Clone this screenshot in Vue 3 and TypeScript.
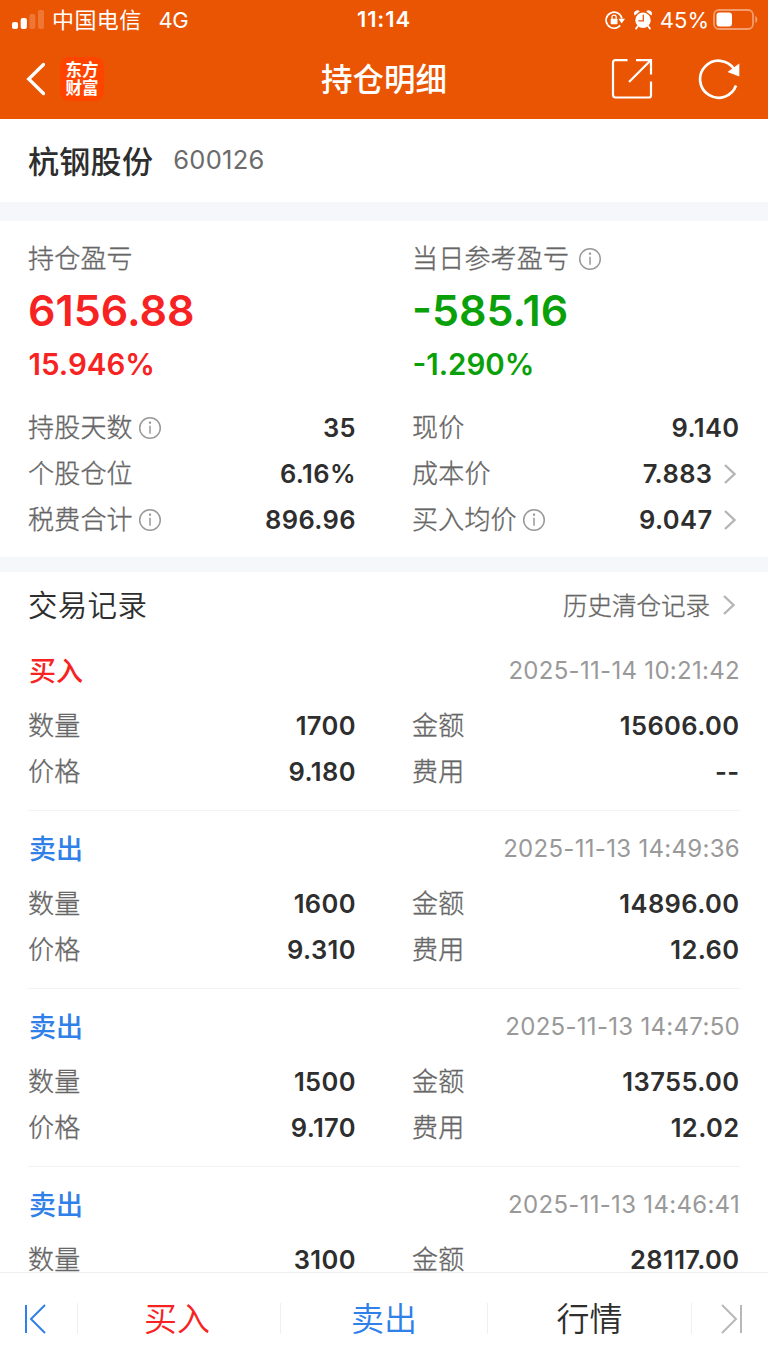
<script setup lang="ts">
interface Cell { label: string; value: string; info?: boolean; arrow?: boolean }
interface Trade { side: string; kind: 'buy' | 'sell'; time: string; cells: Cell[] }

const stats: Cell[] = [
  { label: '持股天数', value: '35', info: true },
  { label: '现价', value: '9.140' },
  { label: '个股仓位', value: '6.16%' },
  { label: '成本价', value: '7.883', arrow: true },
  { label: '税费合计', value: '896.96', info: true },
  { label: '买入均价', value: '9.047', info: true, arrow: true },
]

function trade(kind: 'buy' | 'sell', time: string, qty: string, amount: string, price?: string, fee?: string): Trade {
  const cells: Cell[] = [
    { label: '数量', value: qty },
    { label: '金额', value: amount },
  ]
  if (price && fee) cells.push({ label: '价格', value: price }, { label: '费用', value: fee })
  return { side: kind === 'buy' ? '买入' : '卖出', kind, time, cells }
}

const trades: Trade[] = [
  trade('buy', '2025-11-14 10:21:42', '1700', '15606.00', '9.180', '--'),
  trade('sell', '2025-11-13 14:49:36', '1600', '14896.00', '9.310', '12.60'),
  trade('sell', '2025-11-13 14:47:50', '1500', '13755.00', '9.170', '12.02'),
  trade('sell', '2025-11-13 14:46:41', '3100', '28117.00'),
]
</script>

<template>
  <div class="screen">
    <header class="top">
      <div class="status">
        <div class="status-left">
          <svg class="signal" width="32" height="20" viewBox="0 0 32 20" fill="#fff">
            <rect x="0" y="12" width="6" height="7" rx="2" />
            <rect x="8.7" y="8" width="6.2" height="11" rx="2" />
            <rect x="17.4" y="4" width="6" height="15" rx="2" opacity=".2" />
            <rect x="26" y="0" width="6" height="19" rx="2" opacity=".2" />
          </svg>
          <span class="carrier">中国电信</span>
          <span class="net">4G</span>
        </div>
        <span class="clock">11:14</span>
        <div class="status-right">
          <svg class="lock" width="20" height="20" viewBox="0 0 20 20" fill="none" stroke="#fff" stroke-width="1.7">
            <path d="M15.2 15.4A8 8 0 1 1 16.9 8.5" />
            <path d="M13.4 8.8h6.600l-3.300 4.800z" fill="#fff" stroke="none" />
            <rect x="5.7" y="8.8" width="6.8" height="5.4" rx=".8" fill="#fff" stroke="none" />
            <path d="M7 9V7.2a2.1 2.1 0 0 1 4.200 0V9" stroke-width="1.3" />
          </svg>
          <svg class="alarm" width="18" height="20" viewBox="0 0 18 20">
            <path d="M.6 5.400A3.300 3.300 0 0 1 5.800 1.400zM17.400 5.400A3.300 3.300 0 0 0 12.200 1.400z" fill="#fff" />
            <circle cx="9" cy="10.300" r="7.700" fill="#fff" />
            <path d="M3.800 16.200 2 18.600M14.200 16.200 16 18.600" stroke="#fff" stroke-width="1.800" stroke-linecap="round" />
            <path d="M9.300 5.200V10.800H4.800" stroke="#ea5504" stroke-width="1.300" fill="none" stroke-linecap="round" />
          </svg>
          <span class="percent">45%</span>
          <svg class="battery" width="46" height="22" viewBox="0 0 46 22">
            <rect x="1" y="1" width="39" height="19" rx="5" fill="none" stroke="#fff" stroke-opacity=".42" stroke-width="1.800" />
            <rect x="3.500" y="3.500" width="15.500" height="14" rx="3" fill="#fff" />
            <path d="M42.300 7v7c2.700-1.200 2.700-5.800 0-7z" fill="#fff" opacity=".45" />
          </svg>
        </div>
      </div>
      <nav class="nav">
        <div class="nav-side">
          <svg class="back" width="20" height="34" viewBox="0 0 20 34" fill="none" stroke="#fff" stroke-width="3.300" stroke-linecap="round">
            <path d="M18.500 2.500 3.700 17 18.500 31.500" />
          </svg>
          <div class="logo"><span>东方</span><span>财富</span></div>
        </div>
        <h1>持仓明细</h1>
        <div class="nav-side right">
          <svg width="42" height="42" viewBox="0 0 42 42" fill="none" stroke="#fff" stroke-width="2.200">
            <path d="M16.500 2.200H4.500Q2 2.200 2 4.700V36.500Q2 39.500 4.500 39.500H38Q40 39.500 40 37.500V23.500M25 2.200H40V16.500M39.500 2.500 18 24" />
          </svg>
          <svg width="42" height="42" viewBox="0 0 42 42" fill="none" stroke="#fff" stroke-width="2.700">
            <path d="M38 27.500A18.500 18.500 0 1 1 36 11" />
            <path d="M41.300 5.500V18.500L29.500 14z" fill="#fff" stroke="none" />
          </svg>
        </div>
      </nav>
    </header>

    <section class="stock"><strong>杭钢股份</strong><span>600126</span></section>
    <div class="band"></div>

    <section class="summary">
      <div class="profit-grid">
        <div class="profit up">
          <p class="caption">持仓盈亏</p>
          <p class="big">6156.88</p>
          <p class="rate">15.946%</p>
        </div>
        <div class="profit down">
          <p class="caption">当日参考盈亏
            <svg class="info" width="24" height="24" viewBox="0 0 24 24"><circle cx="12" cy="12" r="10.300" /><path d="M12 9.800v8" /><path class="dot" d="M12 5.600v2.100" /></svg>
          </p>
          <p class="big">-585.16</p>
          <p class="rate">-1.290%</p>
        </div>
      </div>
      <div class="cells">
        <div v-for="c in stats" :key="c.label" class="cell">
          <span class="label">{{ c.label }}</span>
          <svg v-if="c.info" class="info" width="24" height="24" viewBox="0 0 24 24"><circle cx="12" cy="12" r="10.300" /><path d="M12 9.800v8" /><path class="dot" d="M12 5.600v2.100" /></svg>
          <b class="value">{{ c.value }}</b>
          <svg v-if="c.arrow" class="arrow" width="14" height="22" viewBox="0 0 14 22"><path d="M2 2 11.500 11 2 20" /></svg>
        </div>
      </div>
    </section>
    <div class="band thin"></div>

    <section class="records">
      <div class="records-head">
        <h2>交易记录</h2>
        <span class="history">历史清仓记录</span>
        <svg class="arrow" width="14" height="22" viewBox="0 0 14 22"><path d="M2 2 11.500 11 2 20" /></svg>
      </div>
      <article v-for="t in trades" :key="t.time" class="trade">
        <div class="trade-head">
          <b :class="t.kind">{{ t.side }}</b>
          <time>{{ t.time }}</time>
        </div>
        <div class="cells">
          <div v-for="c in t.cells" :key="c.label" class="cell">
            <span class="label">{{ c.label }}</span>
            <b class="value">{{ c.value }}</b>
          </div>
        </div>
      </article>
    </section>

    <footer class="bar">
      <div class="edge first">
        <svg width="24" height="30" viewBox="0 0 24 30" fill="none" stroke="#2f80e8" stroke-width="2"><path d="M3 1v28M22 1 8 15 22 29" /></svg>
      </div>
      <div class="tab buy">买入</div>
      <div class="tab sell">卖出</div>
      <div class="tab quote">行情</div>
      <div class="edge last">
        <svg width="24" height="30" viewBox="0 0 24 30" fill="none" stroke="#b8b8b8" stroke-width="2"><path d="M21 1v28M2 1 16 15 2 29" /></svg>
      </div>
    </footer>
  </div>
</template>

<style>
body { margin: 0; overflow: hidden; }
</style>

<style scoped>
.screen {
  width: 768px; height: 1366px; overflow: hidden; background: #fff; color: #2e2e2e;
  display: flex; flex-direction: column;
  font-family: Inter, "Noto Sans CJK SC", sans-serif;
  font-size: 26px; white-space: nowrap;
}
p, h1, h2 { margin: 0; }
svg { flex: none; display: block; }
.top { height: 119px; flex: none; background: #ea5504; color: #fff; }
.status { height: 40px; display: grid; grid-template-columns: 1fr auto 1fr; align-items: center; font-size: 22px; line-height: 40px; }
.status-left, .status-right { display: flex; align-items: center; height: 40px; }
.status-left { padding-left: 12px; }
.signal { margin-right: 8px; }
.carrier { font-size: 22px; letter-spacing: .4px; }
.net { margin-left: 17px; letter-spacing: -.5px; }
.clock { font-weight: 600; font-size: 22px; letter-spacing: .9px; line-height: 39px; height: 40px; }
.status-right { justify-content: flex-end; padding-right: 9px; }
.alarm { margin: 0 8px 0 9px; }
.percent { margin-right: 4px; letter-spacing: 0; }
.nav { height: 79px; display: grid; grid-template-columns: 1fr auto 1fr; align-items: center; padding-bottom: 2px; box-sizing: border-box; }
.nav-side { display: flex; align-items: center; padding-left: 25px; gap: 15px; }
.nav-side.right { justify-content: flex-end; padding: 0 28px 0 0; gap: 45px; }
.back { margin-top: -1px; }
.logo { width: 44px; height: 44px; box-sizing: border-box; padding-top: 4px; border-radius: 9px; background: #ff4400; font-size: 16.500px; line-height: 18px; font-weight: 700; text-align: center; margin-top: -1px; }
.logo span { display: block; }
h1 { font-size: 31.500px; font-weight: 500; line-height: 77px; padding-top: 1px; }
.stock { height: 83px; flex: none; padding: 0 0 2px 28px; box-sizing: border-box; display: flex; align-items: center; gap: 20px; }
.stock strong { font-size: 31px; font-weight: 500; letter-spacing: .3px; }
.stock span { color: #6b6b6b; font-size: 25.500px; letter-spacing: .3px; }
.band { flex: none; height: 19px; background: #f6f7fa; }
.band.thin { height: 15px; }
.summary { height: 336px; flex: none; }
.profit-grid { display: grid; grid-template-columns: 384px 1fr; padding: 18px 0 0 28px; height: 165px; }
.caption { display: flex; align-items: center; gap: 9px; height: 40px; line-height: 40px; letter-spacing: .2px; }
.caption, .label, .history { color: #666; font-weight: 300; -webkit-text-stroke: .35px #666; }
.big { height: 62px; line-height: 62px; font-size: 43px; font-weight: 600; }
.rate { height: 46px; line-height: 46px; font-size: 29.500px; font-weight: 600; padding-left: .5px; }
.up .big, .up .rate { color: #f72323; }
.down .big, .down .rate { color: #0aa00a; }
.summary .cells { padding-top: 1px; }
.cells { display: grid; grid-template-columns: 328px 327.500px; grid-auto-rows: 46px; column-gap: 56px; padding-left: 28px; }
.cell { display: flex; align-items: center; line-height: 24px; }
.label { letter-spacing: .2px; }
.value { margin-left: auto; font-size: 25.500px; font-weight: 600; letter-spacing: .4px; }
.info { fill: none; stroke: #999; stroke-width: 1.500; }
.cell .info { margin-left: 5px; }
.info .dot { stroke-width: 2.200; }
.arrow { fill: none; stroke: #b5b5b5; stroke-width: 2.400; margin: 0 3px 0 10px; }
.records { flex: 1; min-height: 0; overflow: hidden; }
.records-head { height: 61px; padding: 4px 29px 0 28px; box-sizing: border-box; display: flex; align-items: center; }
h2 { font-size: 29.500px; font-weight: 350; flex: 1; letter-spacing: .3px; line-height: 50px; }
.history { font-size: 24.500px; margin-right: 2px; }
.trade { height: 178px; box-sizing: border-box; padding-top: 9px; position: relative; }
.trade::after { content: ""; position: absolute; left: 28px; right: 28px; bottom: 0; height: 1px; background: #f3f3f3; }
.trade-head { height: 56px; display: flex; justify-content: space-between; align-items: center; padding: 0 28px 0 29px; }
.trade-head b { font-size: 27px; font-weight: 500; margin-top: -2px; }
.trade .cells { padding-top: 5px; }
.buy { color: #f72323; }
.sell { color: #2f80e8; }
time { color: #999; font-size: 24px; letter-spacing: .3px; }
.bar { height: 94px; flex: none; border-top: 1px solid #efefef; box-sizing: border-box; background: #fff; display: grid; grid-template-columns: 77px 203px 207px 204px 77px; }
.tab, .edge { box-sizing: border-box; height: 31px; margin-top: 30px; display: flex; align-items: center; justify-content: center; font-size: 33px; line-height: 48px; border-left: 1px solid #efefef; }
.tab { padding: 0 4px 0 0; font-weight: 350; }
.tab.sell { padding-right: 0; }
.tab.quote { padding-right: 0; }
.edge.first { justify-content: flex-start; padding-left: 23px; border-left: 0; }
.edge.last { justify-content: flex-end; padding-right: 24px; }
</style>
